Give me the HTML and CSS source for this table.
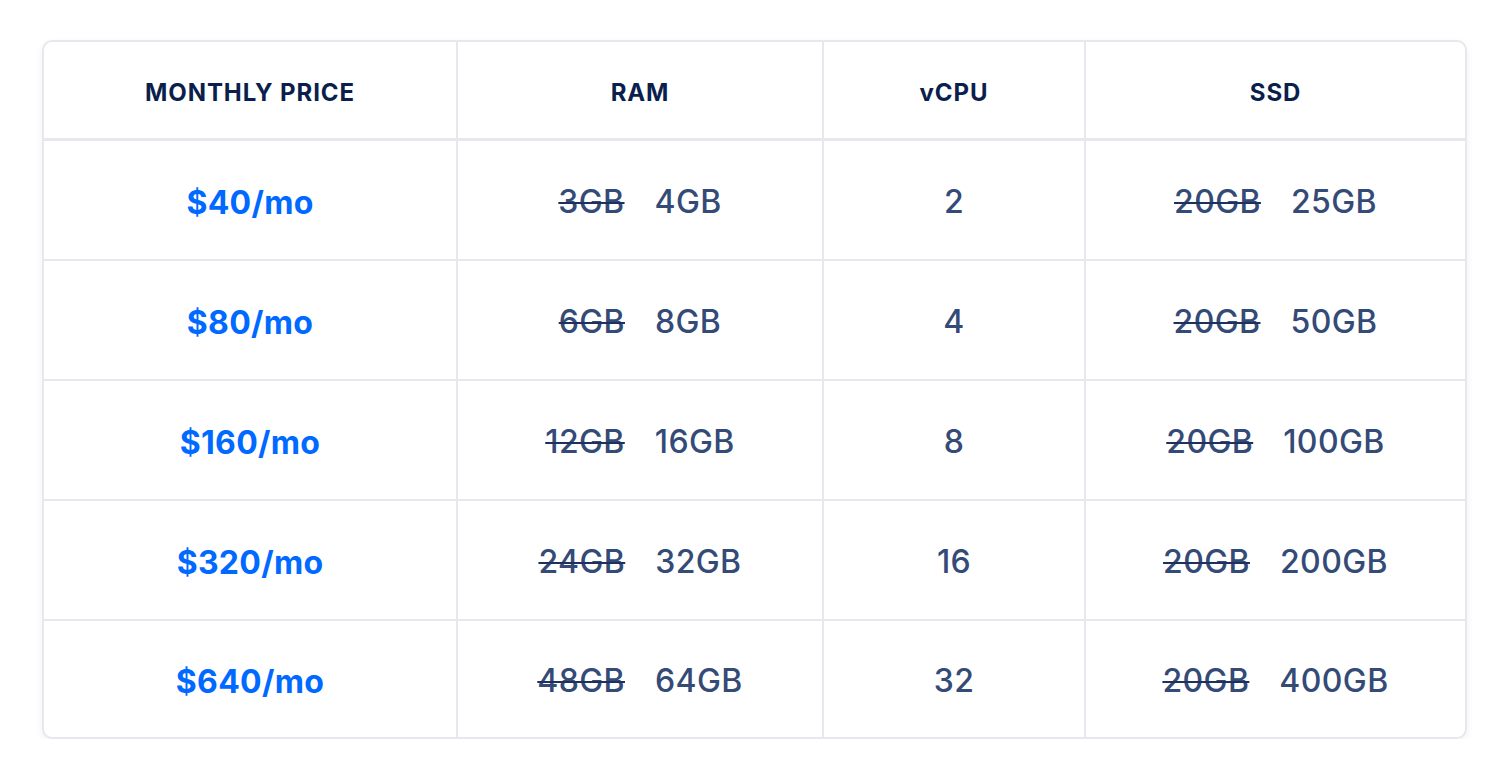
FILE: index.html
```html
<!DOCTYPE html>
<html>
<head>
<meta charset="utf-8">
<link rel="stylesheet" href="styles.css">
</head>
<body>
<div class="card">
  <div class="row head">
    <div class="cell">MONTHLY PRICE</div><div class="cell">RAM</div><div class="cell">vCPU</div><div class="cell">SSD</div>
  </div>
  <div class="row">
    <div class="cell price">$40/mo</div><div class="cell"><s>3GB</s><span>4GB</span></div><div class="cell">2</div><div class="cell"><s>20GB</s><span>25GB</span></div>
  </div>
  <div class="row">
    <div class="cell price">$80/mo</div><div class="cell"><s>6GB</s><span>8GB</span></div><div class="cell">4</div><div class="cell"><s>20GB</s><span>50GB</span></div>
  </div>
  <div class="row">
    <div class="cell price">$160/mo</div><div class="cell"><s>12GB</s><span>16GB</span></div><div class="cell">8</div><div class="cell"><s>20GB</s><span>100GB</span></div>
  </div>
  <div class="row">
    <div class="cell price">$320/mo</div><div class="cell"><s>24GB</s><span>32GB</span></div><div class="cell">16</div><div class="cell"><s>20GB</s><span>200GB</span></div>
  </div>
  <div class="row last">
    <div class="cell price">$640/mo</div><div class="cell"><s>48GB</s><span>64GB</span></div><div class="cell">32</div><div class="cell"><s>20GB</s><span>400GB</span></div>
  </div>
</div>
</body>
</html>
```
FILE: styles.css
```css
html, body { margin: 0; background: #fff; }
body { padding: 40px 0 0 42px; font-family: Inter, "Noto Sans", sans-serif; }
.card {
  width: 1421px;
  border: 2px solid #e6e8ee;
  border-radius: 10px;
  overflow: hidden;
  box-shadow: 0 3px 8px rgba(20, 40, 80, 0.06);
}
.row {
  display: grid;
  grid-template-columns: 412px 366px 262px 381px;
  height: 118px;
  border-bottom: 2px solid #e6e8ee;
}
.row.head { height: 96px; border-bottom-width: 3px; }
.row.last { height: 116px; border-bottom: 0; }
.cell {
  display: flex;
  align-items: center;
  justify-content: center;
  border-left: 2px solid #e6e8ee;
  padding-top: 2px;
  font-size: 32px;
  font-weight: 500;
  letter-spacing: 0.4px;
  color: #344a77;
}
.cell:first-child { border-left: 0; }
.head .cell {
  padding-top: 4px;
  font-size: 24px;
  font-weight: 700;
  letter-spacing: 0.9px;
  color: #0b1f4d;
}
.cell.price { color: #0069ff; font-weight: 700; letter-spacing: 0.3px; padding-top: 4px; }
.cell s {
  text-decoration-thickness: 2px;
  text-decoration-color: #1d305e;
  margin-right: 30px;
}
```
